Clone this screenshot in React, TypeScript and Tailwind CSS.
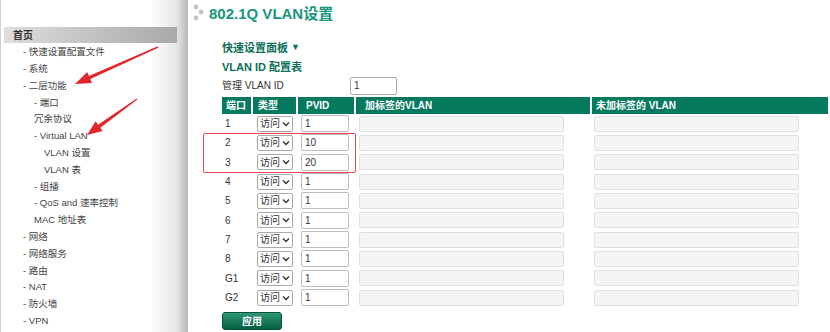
import React from 'react';

type NavItem = { label: string; level: number; dash: boolean };

const nav: NavItem[] = [
    { label: '快速设置配置文件', level: 1, dash: true },
    { label: '系统', level: 1, dash: true },
    { label: '二层功能', level: 1, dash: true },
    { label: '端口', level: 2, dash: true },
    { label: '冗余协议', level: 2, dash: false },
    { label: 'Virtual LAN', level: 2, dash: true },
    { label: 'VLAN 设置', level: 3, dash: false },
    { label: 'VLAN 表', level: 3, dash: false },
    { label: '组播', level: 2, dash: true },
    { label: 'QoS and 速率控制', level: 2, dash: true },
    { label: 'MAC 地址表', level: 2, dash: false },
    { label: '网络', level: 1, dash: true },
    { label: '网络服务', level: 1, dash: true },
    { label: '路由', level: 1, dash: true },
    { label: 'NAT', level: 1, dash: true },
    { label: '防火墙', level: 1, dash: true },
    { label: 'VPN', level: 1, dash: true },
];

const ports = [
    { port: '1', pvid: '1' },
    { port: '2', pvid: '10' },
    { port: '3', pvid: '20' },
    { port: '4', pvid: '1' },
    { port: '5', pvid: '1' },
    { port: '6', pvid: '1' },
    { port: '7', pvid: '1' },
    { port: '8', pvid: '1' },
    { port: 'G1', pvid: '1' },
    { port: 'G2', pvid: '1' },
];

const indent: Record<number, string> = { 1: 'pl-[22px]', 2: 'pl-[33px]', 3: 'pl-[43px]' };

const Sidebar = () => (
    <div className="w-[188px] h-[332px] shrink-0 border-l border-[#cfcfcf] bg-linear-to-r from-white from-[80%] via-[#e6e6e6] via-[94%] to-[#b9b9b9] pt-[27px]">
        <div className="ml-[3px] w-[173px] h-[16px] bg-linear-to-r from-[#dedede] to-[#a9a9a9] pl-[9px] flex items-center text-[10px] font-bold text-[#333]">首页</div>
        <ul className="pt-[1px] text-[9.5px] text-[#444]">
            {nav.map(n => (
                <li key={n.label} className={`h-[16.8px] flex items-center ${indent[n.level]}`}>
                    {n.dash ? `- ${n.label}` : n.label}
                </li>
            ))}
        </ul>
    </div>
);

const TypeSelect = () => (
    <div className="w-[36px] h-[16px] border border-[#a9a9a9] rounded-[2px] bg-white flex items-center justify-between pl-[2px] pr-[2px] text-[10px] text-[#333]">
        <span>访问</span>
        <svg width="8" height="6" viewBox="0 0 8 6"><path d="M1 1.5 L4 4.5 L7 1.5" stroke="#333" strokeWidth="1.4" fill="none" /></svg>
    </div>
);

// tapered red arrows drawn over the sidebar
const Arrows = () => (
    <svg className="absolute left-0 top-0 pointer-events-none" width="830" height="332">
        <g fill="#e3262b">
            <polygon points="157.8,46.3 88.9,75.9 87.2,72 75,84 92,83 90.3,79.1 158.2,47.7" />
            <polygon points="136.7,98.4 98.1,124.7 95.7,121.3 87,135 102.7,131.1 100.3,127.7 137.3,99.6" />
        </g>
    </svg>
);

export default function App() {
    return (
        <div className="relative w-[830px] h-[332px] bg-white overflow-hidden flex" style={{ fontFamily: '"Liberation Sans", "Noto Sans CJK SC", sans-serif' }}>
            <Sidebar />
            <div className="flex-1 relative">
                <div className="flex items-center h-[26px] pl-[5px]">
                    <svg width="14" height="18" viewBox="0 0 14 18" className="mr-[2px]">
                        <circle cx="3" cy="3" r="2.4" fill="#c4c4c4" />
                        <circle cx="8" cy="8" r="2.4" fill="#c4c4c4" />
                        <circle cx="3" cy="14" r="2.4" fill="#c4c4c4" />
                    </svg>
                    <h1 className="text-[15px] font-bold text-[#19957d] leading-none">802.1Q VLAN设置</h1>
                </div>
                <div className="pl-[34px] pt-[13px]">
                    <div className="text-[11px] font-bold text-[#0d6f57] h-[18px] flex items-center">快速设置面板 <span className="ml-[3px] text-[9px]">▼</span></div>
                    <div className="text-[11px] font-bold text-[#0d6f57] h-[18px] flex items-center mt-[1px]">VLAN ID 配置表</div>
                    <div className="flex items-center h-[19px] text-[10px] text-[#333]">
                        <span className="w-[128px]">管理 VLAN ID</span>
                        <div className="w-[47px] h-[18px] border border-[#a9a9a9] rounded-[2px] pl-[3px] flex items-center">1</div>
                    </div>
                    <div className="w-[606px] mt-[2px]">
                        <div className="grid grid-cols-[31px_45px_58px_236px_236px] h-[17px] bg-[#067a5f] text-white text-[10px] font-bold">
                            <div className="flex items-center pl-[4px] border-r-2 border-white">端口</div>
                            <div className="flex items-center pl-[5px] border-r-2 border-white">类型</div>
                            <div className="flex items-center pl-[8px] border-r-2 border-white">PVID</div>
                            <div className="flex items-center pl-[9px] border-r-2 border-white">加标签的VLAN</div>
                            <div className="flex items-center pl-[4px]">未加标签的 VLAN</div>
                        </div>
                        {ports.map(p => (
                            <div key={p.port} className="grid grid-cols-[35px_44px_58px_235px_234px] h-[19.33px] items-center text-[10px] text-[#333]">
                                <div className="pl-[3px]">{p.port}</div>
                                <TypeSelect />
                                <div className="w-[48px] h-[17px] border border-[#bdbdbd] rounded-[2px] pl-[3px] flex items-center bg-white">{p.pvid}</div>
                                <div className="w-[205px] h-[16px] border border-[#e0e0e0] rounded-[2px] bg-[#f5f5f5]" />
                                <div className="w-[205px] h-[16px] border border-[#e0e0e0] rounded-[2px] bg-[#f5f5f5]" />
                            </div>
                        ))}
                    </div>
                    <button className="mt-[5px] w-[60px] h-[18px] rounded-[3px] bg-linear-to-b from-[#2e9a78] to-[#045c41] text-white text-[10px] font-bold border border-[#03513a]">应用</button>
                </div>
                <div className="absolute left-[15px] top-[133px] w-[153px] h-[40px] border border-[#e5474a] rounded-[2px] pointer-events-none" />
            </div>
            <Arrows />
        </div>
    );
}
